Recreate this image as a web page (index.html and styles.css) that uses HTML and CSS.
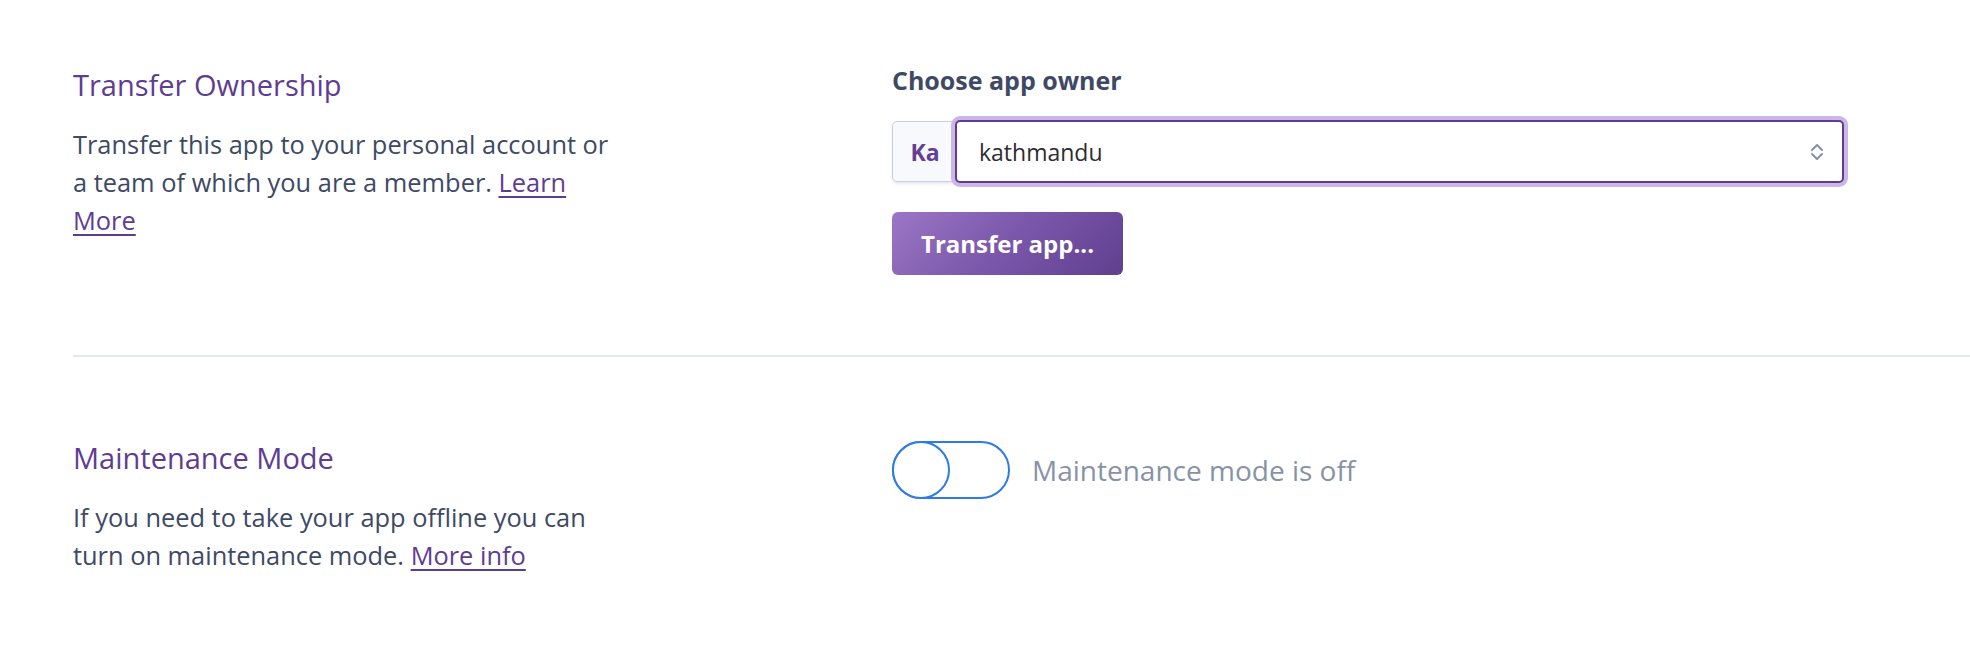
FILE: index.html
```html
<!DOCTYPE html>
<html lang="en">
<head>
<meta charset="utf-8">
<title>App settings</title>
<link rel="stylesheet" href="styles.css">
</head>
<body>
<main class="settings">
  <section class="setting">
    <div class="setting-info">
      <h2 class="setting-title">Transfer Ownership</h2>
      <p class="setting-desc">Transfer this app to your personal account or a team of which you are a member. <a class="link" href="#">Learn More</a></p>
    </div>
    <div class="setting-control">
      <label class="field-label">Choose app owner</label>
      <div class="input-group">
        <span class="addon">Ka</span>
        <div class="select">
          <span class="select-value">kathmandu</span>
          <svg class="select-arrows" width="14" height="20" viewBox="0 0 14 20" aria-hidden="true">
            <path d="M2 8 L7 3 L12 8" fill="none" stroke="#8792a8" stroke-width="2" stroke-linecap="round" stroke-linejoin="round"/>
            <path d="M2 12 L7 17 L12 12" fill="none" stroke="#8792a8" stroke-width="2" stroke-linecap="round" stroke-linejoin="round"/>
          </svg>
        </div>
      </div>
      <button class="btn-primary" type="button">Transfer app...</button>
    </div>
  </section>
  <section class="setting">
    <div class="setting-info">
      <h2 class="setting-title">Maintenance Mode</h2>
      <p class="setting-desc">If you need to take your app offline you can turn on maintenance mode. <a class="link" href="#">More info</a></p>
    </div>
    <div class="setting-control toggle-row">
      <span class="toggle"><span class="toggle-knob"></span></span>
      <span class="toggle-label">Maintenance mode is off</span>
    </div>
  </section>
</main>
</body>
</html>
```

FILE: styles.css
```css
* { box-sizing: border-box; }

html, body {
  margin: 0;
  background: #ffffff;
}

body {
  font-family: "Open Sans", "Noto Sans", sans-serif;
  color: #3e4a65;
}

.settings {
  padding-left: 73px;
}

.setting {
  display: grid;
  grid-template-columns: 819px 952px;
  align-items: start;
  padding: 84px 0 80px;
  border-bottom: 2px solid #e3e7f1;
}

.setting:first-child {
  padding-top: 66px;
}

.setting:last-child {
  border-bottom: none;
}

.setting:first-child .setting-title {
  margin-top: 2px;
}

.setting-title {
  margin: 0;
  font-size: 29px;
  line-height: 34px;
  font-weight: 400;
  color: #5e3d91;
}

.setting-desc {
  margin: 23px 0 0;
  max-width: 540px;
  font-size: 25.4px;
  line-height: 38px;
  color: #3e4a65;
}

.link {
  color: #5e3d91;
  text-decoration: underline;
  text-underline-offset: 4px;
  text-decoration-thickness: 2px;
}

.setting-control {
  display: flex;
  flex-direction: column;
  align-items: flex-start;
}

.field-label {
  font-size: 25px;
  line-height: 28px;
  font-weight: 700;
  color: #3e4a65;
}

.input-group {
  display: flex;
  width: 100%;
  margin-top: 26px;
  height: 63px;
}

.addon {
  display: flex;
  align-items: center;
  justify-content: center;
  width: 66px;
  margin-right: -3px;
  margin-top: 1px;
  height: 61px;
  background: #f8f9fc;
  border: 1px solid #c7d0e3;
  border-radius: 5px 0 0 5px;
  box-shadow: 0 2px 3px rgba(120, 135, 170, 0.18);
  font-size: 23px;
  font-weight: 700;
  color: #633f96;
}

.select {
  flex: 1;
  display: flex;
  align-items: center;
  justify-content: space-between;
  height: 63px;
  padding: 0 18px 0 22px;
  background: #ffffff;
  border: 2px solid #5e3d91;
  border-radius: 5px;
  box-shadow: 0 0 0 4px #cbb6e4;
}

.select-value {
  font-size: 23px;
  color: #2d2d33;
}

.btn-primary {
  margin-top: 29px;
  height: 63px;
  padding: 0 29px;
  border: none;
  border-radius: 6px;
  background: linear-gradient(135deg, #9c76c6 0%, #7a57aa 50%, #613f8f 100%);
  font-family: "Open Sans", "Noto Sans", sans-serif;
  font-size: 24px;
  font-weight: 700;
  color: #ffffff;
  cursor: pointer;
}

.toggle-row {
  flex-direction: row;
  align-items: center;
}

.toggle {
  display: flex;
  width: 118px;
  height: 58px;
  border: 2px solid #2f7be6;
  border-radius: 29px;
  background: #ffffff;
}

.toggle-knob {
  width: 58px;
  height: 58px;
  margin: -2px;
  border: 2px solid #2f7be6;
  border-radius: 50%;
  background: #ffffff;
}

.toggle-label {
  margin-left: 22px;
  font-size: 28px;
  color: #8892a6;
}
```
